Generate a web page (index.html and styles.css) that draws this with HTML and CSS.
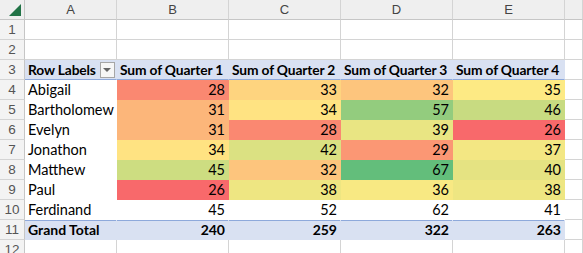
FILE: index.html
```html
<!DOCTYPE html>
<html>
<head>
<meta charset="utf-8">
<link rel="stylesheet" href="styles.css">
</head>
<body>
<div class="sheet">
  <div class="corner"><span class="tri"></span></div>
  <div class="ch">A</div><div class="ch">B</div><div class="ch">C</div><div class="ch">D</div><div class="ch">E</div><div class="ch last"></div>

  <div class="rh">1</div><div class="c"></div><div class="c"></div><div class="c"></div><div class="c"></div><div class="c"></div><div class="c"></div>
  <div class="rh">2</div><div class="c"></div><div class="c"></div><div class="c"></div><div class="c"></div><div class="c"></div><div class="c"></div>

  <div class="rh">3</div>
  <div class="c hd lbl">Row Labels <span class="dd"></span></div>
  <div class="c hd">Sum of Quarter 1</div>
  <div class="c hd">Sum of Quarter 2</div>
  <div class="c hd">Sum of Quarter 3</div>
  <div class="c hd">Sum of Quarter 4</div>
  <div class="c"></div>

  <div class="rh">4</div><div class="c pv">Abigail</div>
  <div class="c pv n" style="background:#FA8871">28</div><div class="c pv n" style="background:#FED47F">33</div><div class="c pv n" style="background:#FDC57D">32</div><div class="c pv n" style="background:#FDEA84">35</div><div class="c"></div>

  <div class="rh">5</div><div class="c pv">Bartholomew</div>
  <div class="c pv n" style="background:#FCB67A">31</div><div class="c pv n" style="background:#FFE382">34</div><div class="c pv n" style="background:#93CC7E">57</div><div class="c pv n" style="background:#C8DB81">46</div><div class="c"></div>

  <div class="rh">6</div><div class="c pv">Evelyn</div>
  <div class="c pv n" style="background:#FCB67A">31</div><div class="c pv n" style="background:#FA8871">28</div><div class="c pv n" style="background:#E9E583">39</div><div class="c pv n" style="background:#F8696B">26</div><div class="c"></div>

  <div class="rh">7</div><div class="c pv">Jonathon</div>
  <div class="c pv n" style="background:#FFE382">34</div><div class="c pv n" style="background:#DBE182">42</div><div class="c pv n" style="background:#FB9774">29</div><div class="c pv n" style="background:#F3E783">37</div><div class="c"></div>

  <div class="rh">8</div><div class="c pv">Matthew</div>
  <div class="c pv n" style="background:#CDDD81">45</div><div class="c pv n" style="background:#FDC57D">32</div><div class="c pv n" style="background:#63BE7B">67</div><div class="c pv n" style="background:#E5E382">40</div><div class="c"></div>

  <div class="rh">9</div><div class="c pv">Paul</div>
  <div class="c pv n" style="background:#F8696B">26</div><div class="c pv n" style="background:#EEE682">38</div><div class="c pv n" style="background:#F8E983">36</div><div class="c pv n" style="background:#EEE682">38</div><div class="c"></div>

  <div class="rh">10</div><div class="c pv">Ferdinand</div>
  <div class="c pv n">45</div><div class="c pv n">52</div><div class="c pv n">62</div><div class="c pv n">41</div><div class="c"></div>

  <div class="rh">11</div><div class="c gt">Grand Total</div>
  <div class="c gt n">240</div><div class="c gt n">259</div><div class="c gt n">322</div><div class="c gt n">263</div><div class="c"></div>

  <div class="rh">12</div><div class="c"></div><div class="c"></div><div class="c"></div><div class="c"></div><div class="c"></div><div class="c"></div>
</div>
</body>
</html>
```
FILE: styles.css
```css
* { box-sizing: border-box; }
html, body { margin: 0; padding: 0; background: #fff; overflow: hidden; }
body { width: 583px; height: 253px; }
.sheet {
  display: grid;
  grid-template-columns: 25px 92px 112px 112px 112px 112px 18px;
  grid-template-rows: 20px repeat(12, 20px);
  font-family: Lato, "Open Sans", sans-serif;
  font-size: 14.5px;
  color: #000;
}
.corner {
  background: #efefef;
  border-right: 1px solid #c6c6c6;
  border-bottom: 1px solid #c6c6c6;
  position: relative;
}
.tri {
  position: absolute;
  right: 3px; bottom: 3px;
  width: 0; height: 0;
  border-left: 12px solid transparent;
  border-bottom: 12px solid #217346;
}
.ch {
  background: #efefef;
  border-right: 1px solid #d4d4d4;
  border-bottom: 1px solid #c6c6c6;
  color: #444;
  font-family: "Liberation Sans", sans-serif;
  font-size: 13px;
  display: flex; align-items: center; justify-content: center;
}
.rh {
  background: #f3f3f3;
  border-right: 1px solid #c6c6c6;
  border-bottom: 1px solid #d4d4d4;
  color: #555;
  font-family: "Liberation Sans", sans-serif;
  font-size: 13.5px;
  display: flex; align-items: center; justify-content: center;
}
.c {
  border-right: 1px solid #d4d4d4;
  border-bottom: 1px solid #d4d4d4;
  display: flex; align-items: center;
  padding: 0 3px;
  white-space: nowrap;
  overflow: visible;
}
.pv { background: #fff; border-color: transparent; }
.n { justify-content: flex-end; }
.hd {
  background: #d9e1f2;
  border-right-color: transparent;
  border-bottom: 1px solid #8ea9db;
  font-weight: bold;
  font-size: 13.8px;
  letter-spacing: -0.15px;
  padding: 0 3px;
}
.lbl { padding-right: 1px; gap: 4px; }
.dd {
  width: 16px; height: 16px;
  margin-left: auto;
  background: #f6f6f6;
  border: 1px solid #a6a6a6;
  display: flex; align-items: center; justify-content: center;
}
.dd::after {
  content: "";
  border-left: 4px solid transparent;
  border-right: 4px solid transparent;
  border-top: 4px solid #666;
}
.gt {
  background: #d9e1f2;
  border-right-color: transparent;
  border-bottom-color: #d9e1f2;
  font-weight: bold;
  font-size: 14px;
}
.sheet > .gt { box-shadow: inset 0 1px 0 #8ea9db; }
```
